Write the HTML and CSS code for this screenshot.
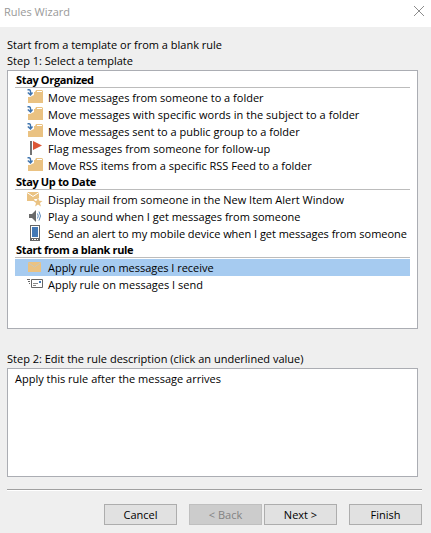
FILE: index.html
```html
<!DOCTYPE html>
<html lang="en">
  <head>
    <meta charset="UTF-8" />
    <title>Rules Wizard</title>
    <link rel="stylesheet" href="styles.css">
  </head>
  <body>
    <svg class="defs" width="0" height="0">
      <symbol id="folder" viewBox="0 0 17 17">
        <path d="M1 8h2l4-2V3h1l1-2h6l1 1v12H1z" fill="#eac282" />
        <path d="M10 2.5h5" stroke="#fff" fill="none" />
        <path d="M.5 .7H2q1.500 0 1.500 2v3M.8 3.500l2.700 2.500L5.500 3.500" stroke="#3f74ae" stroke-width="1.4" fill="none" />
      </symbol>
    </svg>
    <div class="titlebar">
      <span>Rules Wizard</span>
      <svg class="close" width="12" height="12" viewBox="0 0 12 12">
        <path d="M1 1l10 10M11 1L1 11" stroke="#8c8c8c" fill="none" />
      </svg>
    </div>
    <div class="content">
      <div class="label intro">Start from a template or from a blank rule</div>
      <div class="label">Step 1: Select a template</div>
      <div class="list">
        <div class="group">Stay Organized</div>
        <div class="item"><svg><use href="#folder" /></svg><span>Move messages from someone to a folder</span></div>
        <div class="item"><svg><use href="#folder" /></svg><span class="wide">Move messages with specific words in the subject to a folder</span></div>
        <div class="item"><svg><use href="#folder" /></svg><span>Move messages sent to a public group to a folder</span></div>
        <div class="item">
          <svg viewBox="0 0 17 17">
            <path d="M3 1h2v14H3z" fill="#737373" />
            <path d="M6 1l9 4.500L6 10z" fill="#dc5635" />
          </svg>
          <span class="wide">Flag messages from someone for follow-up</span>
        </div>
        <div class="item"><svg><use href="#folder" /></svg><span>Move RSS items from a specific RSS Feed to a folder</span></div>

        <div class="group">Stay Up to Date</div>
        <div class="item">
          <svg viewBox="0 0 17 17">
            <path d="M0 1h12v6l-2 1H7l1 2H0z" fill="#eac282" />
            <path d="M0 1.500l6 4 6-4" stroke="#fff" fill="none" />
            <path d="M11 6.500l1.300 3.200 3.200.2-2.500 2.200.9 3.400-2.900-1.900-2.900 1.900.9-3.400-2.500-2.200 3.200-.2z" fill="#eac282" />
          </svg>
          <span>Display mail from someone in the New Item Alert Window</span>
        </div>
        <div class="item">
          <svg viewBox="0 0 17 17">
            <path d="M2 6h3l4-4v12l-4-4H2z" fill="#6a6a6a" />
            <path d="M10.500 5.500q1.500 2.500 0 5M12 3.500q3 4.500 0 9" stroke="#5e8cbd" fill="none" />
          </svg>
          <span>Play a sound when I get messages from someone</span>
        </div>
        <div class="item">
          <svg viewBox="0 0 17 17">
            <path d="M3 0h10v16H3z" fill="#666" />
            <path d="M4 1h8v12H4z" fill="#fff" />
            <path d="M5 2h6v10H5z" fill="#4479b5" />
            <path d="M5 14h1v1H5zM7 14h2v1H7zM10 14h1v1h-1z" fill="#fff" />
          </svg>
          <span class="narrow">Send an alert to my mobile device when I get messages from someone</span>
        </div>

        <div class="group">Start from a blank rule</div>
        <div class="item selected">
          <svg viewBox="0 0 17 17">
            <path d="M1 3h13v10H1z" fill="#eac282" />
            <path d="M1 3.500l6.500 4.500L14 3.500" stroke="#c9c8bb" fill="none" />
          </svg>
          <span class="narrow">Apply rule on messages I receive</span>
        </div>
        <div class="item">
          <svg viewBox="0 0 17 17">
            <path d="M0 3.500h3M1 5.500h2M2 7.500h1" stroke="#666" fill="none" />
            <path d="M4.500 3.500h11v8h-11z" stroke="#666" fill="#fff" />
            <path d="M6 7.500h5M6 9.500h3" stroke="#888" fill="none" />
            <path d="M12 5h2v2h-2z" fill="#4479b5" />
          </svg>
          <span>Apply rule on messages I send</span>
        </div>
      </div>
      <div class="label step2">Step 2: Edit the rule description (click an underlined value)</div>
      <div class="description">Apply this rule after the message arrives</div>
    </div>
    <div class="buttons">
      <button class="cancel">Cancel</button>
      <button class="back" disabled>&lt; Back</button>
      <button>Next &gt;</button>
      <button class="finish">Finish</button>
    </div>
  </body>
</html>
```
FILE: styles.css
```css
* {
  box-sizing: border-box;
}
body {
  margin: 0;
  height: 533px;
  background-color: #efefef;
  font-family: "Open Sans", "Noto Sans", sans-serif;
  font-size: 11px;
  color: #000;
  overflow: hidden;
}
.defs {
  display: block;
}
.titlebar {
  display: flex;
  justify-content: space-between;
  height: 27px;
  padding: 0 6px 0 4px;
  background-color: #fff;
  color: #999;
  line-height: 24px;
}
.close {
  margin-top: 5px;
}
.content {
  padding: 0 13px 0 7px;
}
.label {
  height: 16px;
  line-height: 16px;
  white-space: nowrap;
}
.intro {
  margin-top: 10px;
}
.list {
  height: 259px;
  margin-top: 1px;
  padding: 1px 7px;
  background-color: #fff;
  border: 1px solid #abadb3;
}
.group {
  height: 17px;
  padding-left: 1px;
  line-height: 16px;
  font-weight: bold;
  letter-spacing: -0.35px;
  background: linear-gradient(#bcbcbc, #bcbcbc) 0 15px / 100% 1px no-repeat;
}
.item {
  display: flex;
  height: 17px;
  padding-left: 12px;
  line-height: 18px;
  white-space: nowrap;
}
.item svg {
  flex: none;
  width: 17px;
  height: 17px;
  margin-right: 4px;
}
.wide {
  letter-spacing: 0.04px;
}
.narrow {
  letter-spacing: -0.03px;
}
.selected {
  background-color: #a6cbf0;
}
.step2 {
  margin-top: 22px;
}
.description {
  height: 109px;
  margin-top: 1px;
  padding: 1px 7px;
  line-height: 17px;
  background-color: #fff;
  border: 1px solid #abadb3;
}
.buttons {
  display: flex;
  margin: 12px 9px 0 7px;
  padding-top: 14px;
  border-top: 1px solid #a0a0a0;
  box-shadow: inset 0 1px #fff;
}
button {
  width: 73px;
  height: 21px;
  padding: 0;
  background-color: #e1e1e1;
  border: 1px solid #adadad;
  font: inherit;
  line-height: 19px;
  color: #000;
}
.cancel {
  margin-left: 97px;
}
.back {
  margin: 0 2px 0 12px;
  background-color: #ccc;
  border-color: #bfbfbf;
  color: #838383;
}
.finish {
  margin-left: 12px;
}
```
